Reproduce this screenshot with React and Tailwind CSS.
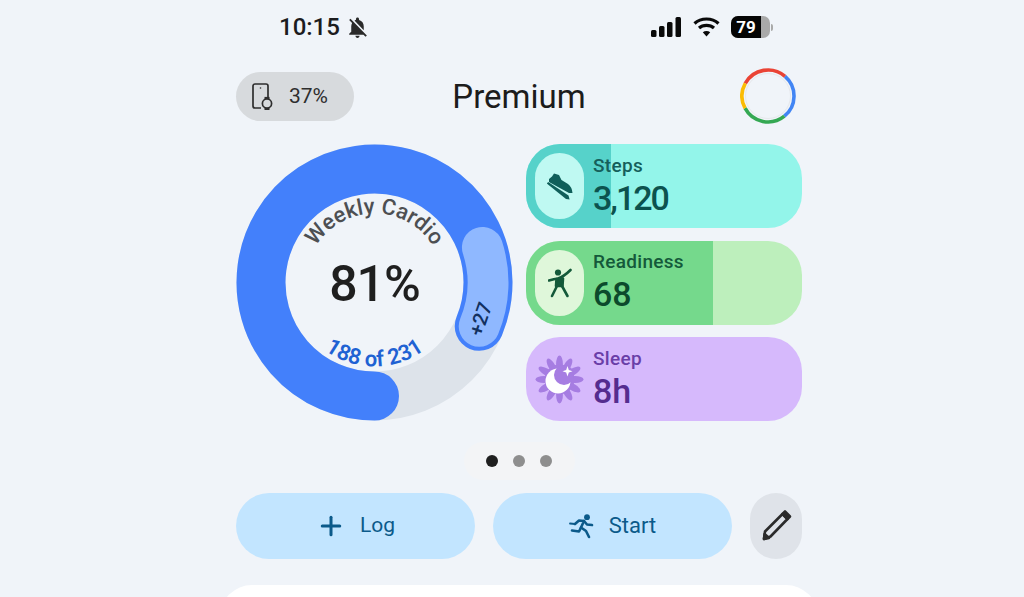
import { Plus } from "lucide-react";
import { MdNotificationsOff } from "react-icons/md";

const FONT = "font-['Roboto',sans-serif]";

const polar = (cx, cy, r, deg) => {
  const a = ((deg - 90) * Math.PI) / 180;
  return [cx + r * Math.cos(a), cy + r * Math.sin(a)];
};

// angles are clockwise from 12 o'clock
const arc = (cx, cy, r, from, to) => {
  const [x1, y1] = polar(cx, cy, r, from);
  const [x2, y2] = polar(cx, cy, r, to);
  const span = ((to - from) % 360 + 360) % 360;
  return `M${x1} ${y1} A${r} ${r} 0 ${span > 180 ? 1 : 0} 1 ${x2} ${y2}`;
};

const arcBack = (cx, cy, r, from, to) => {
  const [x1, y1] = polar(cx, cy, r, from);
  const [x2, y2] = polar(cx, cy, r, to);
  return `M${x1} ${y1} A${r} ${r} 0 0 0 ${x2} ${y2}`;
};

function StatusBar() {
  return (
    <div className="flex h-[54px] w-full items-center justify-between pl-[43px] pr-[29px]">
      <div className="flex items-center gap-[5px]">
        <span className="text-[24px] font-medium leading-none text-[#1c1c1e]">10:15</span>
        <MdNotificationsOff size={25} className="text-[#2a2a2a]" />
      </div>
      <div className="flex items-center gap-[11px]">
        <svg width="31" height="20" viewBox="0 0 31 20" fill="#0a0a0a">
          <rect x="0" y="13" width="5.5" height="7" rx="1.5" />
          <rect x="8" y="9" width="5.5" height="11" rx="1.5" />
          <rect x="16" y="5" width="5.5" height="15" rx="1.5" />
          <rect x="24.5" y="0" width="5.5" height="20" rx="1.5" />
        </svg>
        <svg width="27" height="20" viewBox="0 0 27 20" fill="none" stroke="#0a0a0a" strokeWidth="3.2">
          <path d="M1.5 6.5 C8 0.5 19 0.5 25.5 6.5" />
          <path d="M6 11 C10 7.5 17 7.5 21 11" />
          <path d="M13.5 19.5 L9.8 15.3 C12 13.6 15 13.6 17.2 15.3 Z" fill="#0a0a0a" stroke="none" />
        </svg>
        <div className="flex items-center">
          <div className="flex h-[22px] w-[39px] overflow-hidden rounded-[7px] bg-[#a9a9a9]">
            <div className="flex w-[30px] items-center justify-center bg-[#050505] text-[17px] font-bold leading-none text-white">
              79
            </div>
          </div>
          <div className="ml-px h-[7px] w-[2px] rounded-r-sm bg-[#a9a9a9]" />
        </div>
      </div>
    </div>
  );
}

function GoogleRing() {
  const segs = [
    ["#ea4335", -61, 41],
    ["#4285f4", 41, 141],
    ["#34a853", 141, 242],
    ["#fbbc04", 242, 299],
  ];
  return (
    <svg width="56" height="56" viewBox="0 0 56 56" fill="none">
      <circle cx="28" cy="28" r="22.5" stroke="#e6e8ec" strokeWidth="1" />
      {segs.map(([color, a, b]) => (
        <path key={color} d={arc(28, 28, 26, a, b)} stroke={color} strokeWidth="3.6" />
      ))}
    </svg>
  );
}

function Header() {
  return (
    <div className="mt-[14px] grid h-[55px] w-full grid-cols-[1fr_auto_1fr] items-center">
      <div className="flex h-[49px] w-[118px] items-center gap-[14px] rounded-full bg-[#d7dadd] pl-[15px]">
        <svg width="24" height="27" viewBox="0 0 24 27" fill="none" stroke="#2e2e2e" strokeWidth="1.7">
          <path d="M10 25 H4 a2 2 0 0 1 -2 -2 V3 a2 2 0 0 1 2 -2 H15 a2 2 0 0 1 2 2 V15" />
          <circle cx="16" cy="20.5" r="4.6" />
          <path d="M13.5 15 L18.5 15" strokeWidth="2.2" />
          <path d="M13.5 26 L18.5 26" strokeWidth="2.2" />
          <circle cx="9.5" cy="5" r="0.8" fill="#2e2e2e" stroke="none" />
        </svg>
        <span className="text-[21px] leading-none text-[#2e2e2e]">37%</span>
      </div>
      <span className="text-[33px] leading-none text-[#1c1c1c]">Premium</span>
      <div className="mr-[6px] justify-self-end">
        <GoogleRing />
      </div>
    </div>
  );
}

function CardioRing() {
  const c = 138.5;
  const [px, py] = polar(c, c, 112, 109);
  return (
    <svg width="277" height="277" viewBox="0 0 277 277" fill="none" className="shrink-0">
      <defs>
        <path id="cardio-top" d={arc(c, c, 69, 270, 90)} />
        <path id="cardio-bottom" d={arcBack(c, c, 84, 270, 90)} />
      </defs>
      <circle cx={c} cy={c} r="113.5" stroke="#dde3ea" strokeWidth="49" />
      <path d={arc(c, c, 113.5, 180, 112.7)} stroke="#4380fb" strokeWidth="49" strokeLinecap="round" />
      <path d={arc(c, c, 113.5, 72, 112.7)} stroke="#8fb8ff" strokeWidth="41" strokeLinecap="round" />
      <text className="fill-[#4d4f52] text-[22px] font-medium">
        <textPath href="#cardio-top" startOffset="50%" textAnchor="middle">
          Weekly Cardio
        </textPath>
      </text>
      <text className="fill-[#1f62d3] text-[22px] font-semibold">
        <textPath href="#cardio-bottom" startOffset="50%" textAnchor="middle">
          188 of 231
        </textPath>
      </text>
      <text
        x={c}
        y={c + 18}
        textAnchor="middle"
        className="fill-[#1f1f1f] text-[50px] font-medium tracking-[-1px]"
      >
        81%
      </text>
      <text
        transform={`translate(${px} ${py}) rotate(-71)`}
        textAnchor="middle"
        dominantBaseline="central"
        className="fill-[#12305f] text-[20px] font-medium"
      >
        +27
      </text>
    </svg>
  );
}

function ShoeIcon() {
  return (
    <svg width="27" height="27" viewBox="0 0 27 27" fill="#0f5f5a">
      <path d="M3 6 L6 3.5 L8 0.5 L13 2 L15.5 7 L22 11 Q26 14 26.5 20 L23 20 L12 14 L3 9 Z" />
      <path d="M0.8 10.5 L2.2 9 L22.5 22.6 L23.6 26.4 L20 26 Z" />
    </svg>
  );
}

function FigureIcon() {
  return (
    <svg width="24" height="30" viewBox="0 0 24 30" fill="none" stroke="#14593a" strokeWidth="2.6" strokeLinecap="round" strokeLinejoin="round">
      <circle cx="10" cy="4.5" r="3.1" fill="#14593a" stroke="none" />
      <path d="M1 12.5 Q6 11 10 10.5 Q16 8.5 22.5 2" />
      <path d="M8.5 11 L15 10.5 L14.5 18 L8 18 Z" fill="#14593a" />
      <path d="M9 18 L4 28" />
      <path d="M14 18 L19.5 28" />
    </svg>
  );
}

function SleepIcon() {
  const petals = Array.from({ length: 12 }, (_, i) => i * 30);
  return (
    <svg width="49" height="49" viewBox="0 0 49 49" fill="#a67de2">
      {petals.map((deg) => (
        <ellipse key={deg} cx="24.5" cy="9" rx="3.4" ry="8.5" transform={`rotate(${deg} 24.5 24.5)`} />
      ))}
      <circle cx="24.5" cy="24.5" r="15" />
      <circle cx="23" cy="26" r="12.5" fill="#ffffff" />
      <circle cx="29" cy="20" r="10" />
      <path d="M32.5 11 L33.8 15 L37.5 16.2 L33.8 17.4 L32.5 21.5 L31.2 17.4 L27.5 16.2 L31.2 15 Z" fill="#ffffff" />
    </svg>
  );
}

const METRICS = [
  {
    label: "Steps",
    value: "3,120",
    valueTracking: "tracking-[-2px]",
    track: "bg-[#93f5ea]",
    bar: "bg-[#56d2ca]",
    fill: 85,
    chip: "bg-[#bff9f2]",
    labelColor: "text-[#155f5b]",
    valueColor: "text-[#0c524e]",
    icon: <ShoeIcon />,
  },
  {
    label: "Readiness",
    value: "68",
    valueTracking: "",
    track: "bg-[#bdefbc]",
    bar: "bg-[#75d98c]",
    fill: 187,
    chip: "bg-[#dff7da]",
    labelColor: "text-[#14593a]",
    valueColor: "text-[#0c4a2c]",
    icon: <FigureIcon />,
  },
  {
    label: "Sleep",
    value: "8h",
    valueTracking: "",
    track: "bg-[#d6b9fc]",
    bar: "",
    fill: 0,
    chip: "",
    labelColor: "text-[#6a3ea8]",
    valueColor: "text-[#552c8f]",
    icon: <SleepIcon />,
  },
];

function MetricCard({ metric }) {
  return (
    <div className={`relative flex h-[84px] items-center overflow-hidden rounded-[34px] pl-[9px] ${metric.track}`}>
      {metric.fill > 0 && (
        <div className={`absolute inset-y-0 left-0 ${metric.bar}`} style={{ width: metric.fill }} />
      )}
      <div className={`relative flex h-[66px] w-[49px] items-center justify-center rounded-full ${metric.chip}`}>
        {metric.icon}
      </div>
      <div className="relative ml-[9px] flex flex-col">
        <span className={`text-[19px] font-medium leading-[20px] tracking-[0.3px] ${metric.labelColor}`}>{metric.label}</span>
        <span className={`mt-[3px] text-[34px] font-medium leading-[38px] ${metric.valueTracking} ${metric.valueColor}`}>
          {metric.value}
        </span>
      </div>
    </div>
  );
}

function RunIcon() {
  return (
    <svg width="26" height="26" viewBox="0 0 26 26" fill="none" stroke="#0b5a8a" strokeWidth="2.6" strokeLinecap="round" strokeLinejoin="round">
      <circle cx="18" cy="4.2" r="2.9" fill="#0b5a8a" stroke="none" />
      <path d="M6 11 L10 7.5 L15 8 L12 14.5 L17 18 L20 24" />
      <path d="M15 8 L18 11.5 L23 12" />
      <path d="M12 14.5 L10 18.5 L3 17.5" />
      <path d="M1 10.5 L6 11" strokeWidth="1.8" />
    </svg>
  );
}

function PencilIcon() {
  return (
    <svg width="31" height="33" viewBox="0 0 31 33" fill="none" stroke="#2b2b2b" strokeWidth="2.6" strokeLinejoin="round">
      <path d="M3 30 L4 22.5 L21.5 5 L26.5 10 L9.5 27.5 Z" />
      <path d="M21.5 5 L24 2.5 L29 7.5 L26.5 10 Z" fill="#2b2b2b" />
      <path d="M3 30 L3.6 25 L8 29 Z" fill="#2b2b2b" />
    </svg>
  );
}

export default function App() {
  return (
    <div className={`h-screen w-full overflow-hidden bg-[#f0f4f9] ${FONT}`}>
      <div className="ml-[236px] flex w-[566px] flex-col">
        <StatusBar />
        <Header />

        <div className="mt-[21px] flex items-start justify-between">
          <CardioRing />
          <div className="flex w-[276px] flex-col gap-[12.5px]">
            {METRICS.map((m) => (
              <MetricCard key={m.label} metric={m} />
            ))}
          </div>
        </div>

        {/* Pager */}
        <div className="mt-[20.5px] flex justify-center">
          <div className="flex h-[38px] w-[111px] items-center justify-center gap-[15px] rounded-[19px] bg-[#f3f4f6]">
            <span className="h-[12px] w-[12px] rounded-full bg-[#1f1f1f]" />
            <span className="h-[12px] w-[12px] rounded-full bg-[#8e8e8e]" />
            <span className="h-[12px] w-[12px] rounded-full bg-[#8e8e8e]" />
          </div>
        </div>

        {/* Actions */}
        <div className="mt-[13px] flex h-[66px] gap-[18px]">
          <button className="flex w-[239px] items-center justify-center gap-[14px] rounded-full bg-[#c2e5ff] text-[21px] text-[#0b5a8a]">
            <Plus size={30} strokeWidth={2.4} />
            Log
          </button>
          <button className="flex w-[239px] items-center justify-center gap-[14px] rounded-full bg-[#c2e5ff] text-[22px] text-[#0b5a8a]">
            <RunIcon />
            Start
          </button>
          <button className="flex w-[52px] items-center justify-center rounded-full bg-[#dfe3e9]">
            <PencilIcon />
          </button>
        </div>

        <div className="-mx-4 mt-[26px] h-[60px] rounded-t-[32px] bg-white" />
      </div>
    </div>
  );
}
